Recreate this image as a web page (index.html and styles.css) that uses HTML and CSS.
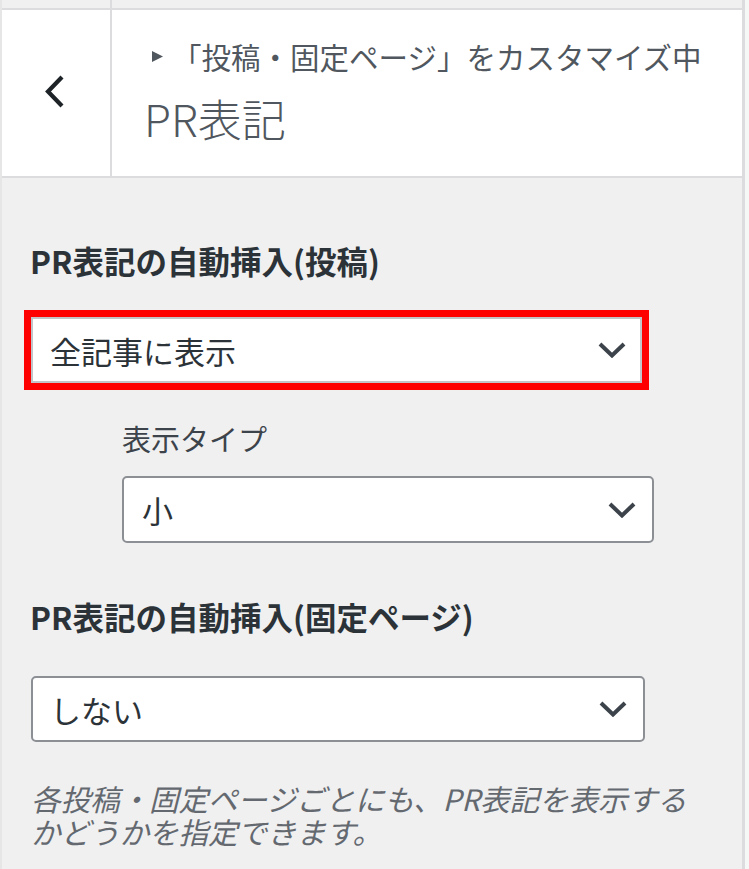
FILE: index.html
```html
<!DOCTYPE html>
<html lang="ja">
<head>
<meta charset="utf-8">
<title>PR表記</title>
<link rel="stylesheet" href="styles.css">
</head>
<body>
<div class="panel">
  <div class="prev">
    <div class="prev-left"></div>
    <div class="prev-right"></div>
  </div>
  <div class="header">
    <div class="back">
      <svg width="24" height="36" viewBox="0 0 24 36" aria-hidden="true"><polyline points="18,3 4,17.5 18,32" fill="none" stroke="#1d2327" stroke-width="4.2"/></svg>
    </div>
    <div class="titles">
      <div class="crumb"><svg class="tri" width="11" height="11" viewBox="0 0 11 11" aria-hidden="true"><polygon points="0,0 11,5.5 0,11" fill="#50575e"/></svg><span>「投稿・固定ページ」をカスタマイズ中</span></div>
      <h3 class="title">PR表記</h3>
    </div>
  </div>
  <div class="content">
    <div class="control">
      <div class="label">PR表記の自動挿入(投稿)</div>
      <div class="select select-main highlight"><span>全記事に表示</span><svg class="chev" width="28" height="16" viewBox="0 0 28 16" aria-hidden="true"><polyline points="2,2 14,13.5 26,2" fill="none" stroke="#3c434a" stroke-width="4"/></svg></div>
    </div>
    <div class="control sub">
      <div class="sublabel">表示タイプ</div>
      <div class="select select-sub"><span>小</span><svg class="chev" width="28" height="16" viewBox="0 0 28 16" aria-hidden="true"><polyline points="2,2 14,13.5 26,2" fill="none" stroke="#3c434a" stroke-width="4"/></svg></div>
    </div>
    <div class="control second">
      <div class="label">PR表記の自動挿入(固定ページ)</div>
      <div class="select select-page"><span>しない</span><svg class="chev" width="28" height="16" viewBox="0 0 28 16" aria-hidden="true"><polyline points="2,2 14,13.5 26,2" fill="none" stroke="#3c434a" stroke-width="4"/></svg></div>
      <p class="desc">各投稿・固定ページごとにも、PR表記を表示するかどうかを指定できます。</p>
    </div>
  </div>
</div>
</body>
</html>
```

FILE: styles.css
```css
html, body {
  margin: 0;
  padding: 0;
}
body {
  background: #f6f7f7;
  font-family: "Noto Sans CJK JP", "Noto Sans", sans-serif;
  color: #2c3338;
  width: 749px;
  height: 869px;
  overflow: hidden;
}
.panel {
  width: 740px;
  height: 869px;
  background: #f0f0f1;
  border-left: 2px solid #e6e6e7;
  border-right: 3px solid #dcdcde;
}
.prev {
  display: flex;
  height: 8px;
  border-bottom: 2px solid #dcdcde;
}
.prev-left {
  width: 108px;
  border-right: 2px solid #dcdcde;
}
.prev-right {
  flex: 1;
}
.header {
  display: flex;
  height: 166px;
  background: #fff;
  border-bottom: 2px solid #dcdcde;
}
.back {
  width: 110px;
  border-right: 2px solid #dcdcde;
  display: flex;
  align-items: center;
  justify-content: center;
  padding-bottom: 2px;
  box-sizing: border-box;
}
.titles {
  flex: 1;
  display: flex;
  flex-direction: column;
  padding: 29px 0 0 32px;
}
.crumb {
  display: flex;
  align-items: center;
  height: 34px;
  font-size: 29.5px;
  line-height: 34px;
  color: #50575e;
  white-space: nowrap;
}
.tri {
  margin: 0 9px 0 8px;
}
.title {
  margin: 20px 0 0;
  font-size: 44px;
  line-height: 50px;
  font-weight: 300;
  color: #50575e;
}
.content {
  padding: 64px 31px 0 28px;
}
.label {
  font-size: 31.5px;
  line-height: 36px;
  font-weight: 700;
  color: #2c3338;
}
.select {
  display: flex;
  align-items: center;
  justify-content: space-between;
  box-sizing: border-box;
  height: 66px;
  background: #fff;
  border: 2px solid #8c8f94;
  border-radius: 5px;
  font-size: 31px;
  color: #2c3338;
  padding: 0 14px 0 17px;
}
.chev {
  display: block;
}
.select-main {
  width: 611px;
  margin: 39px 0 0 1px;
  border-radius: 0;
  border-color: #c3c4c7;
}
.highlight {
  outline: 7px solid #ff0000;
  outline-offset: 0;
}
.sub {
  padding-left: 92px;
  margin-top: 37px;
}
.sublabel {
  font-size: 29px;
  line-height: 36px;
  color: #3c434a;
}
.select-sub {
  width: 532px;
  height: 67px;
  margin-top: 20px;
  padding-left: 18px;
  padding-right: 16px;
}
.second {
  margin-top: 55px;
}
.select-page {
  width: 614px;
  margin: 42px 0 0 1px;
  padding-right: 16px;
}
.desc {
  margin: 40px 0 0 1px;
  font-size: 29.5px;
  line-height: 33px;
  font-style: italic;
  color: #646970;
}
```
